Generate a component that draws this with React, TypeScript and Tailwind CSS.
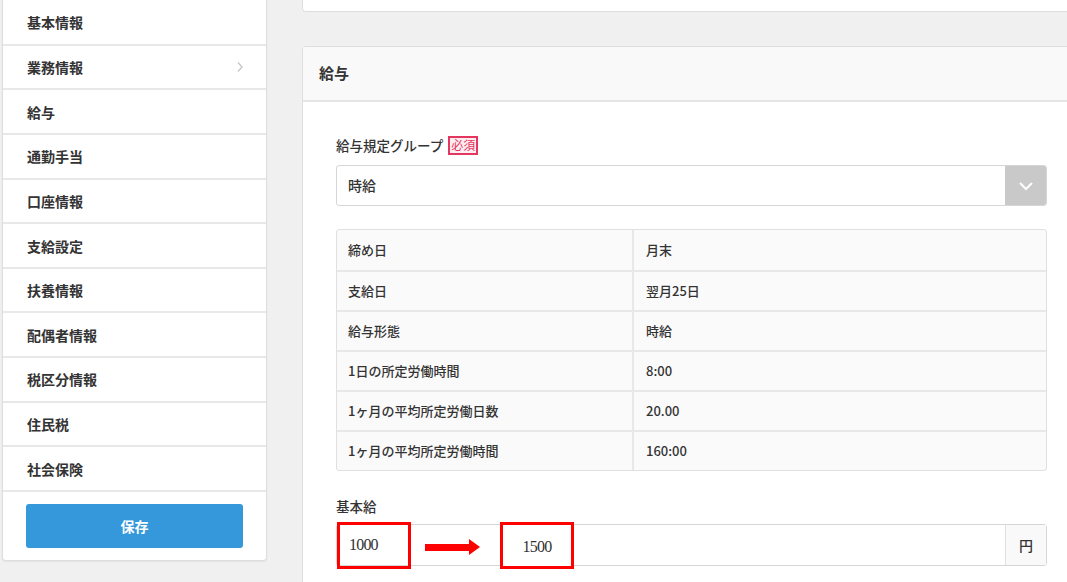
const FONT = { fontFamily: '"Noto Sans CJK JP", "Noto Sans", sans-serif' };

const menuItems = [
  "基本情報",
  "業務情報",
  "給与",
  "通勤手当",
  "口座情報",
  "支給設定",
  "扶養情報",
  "配偶者情報",
  "税区分情報",
  "住民税",
  "社会保険",
];

const rows = [
  ["締め日", "月末"],
  ["支給日", "翌月25日"],
  ["給与形態", "時給"],
  ["1日の所定労働時間", "8:00"],
  ["1ヶ月の平均所定労働日数", "20.00"],
  ["1ヶ月の平均所定労働時間", "160:00"],
];

function Chevron({ className }: { className?: string }) {
  return (
    <svg width="8" height="12" viewBox="0 0 8 12" className={className}>
      <polyline points="2,1.5 6,6 2,10.5" fill="none" stroke="currentColor" strokeWidth="1.4" />
    </svg>
  );
}

export default function App() {
  return (
    <div
      className="w-[1067px] h-[582px] bg-[#f0f0f0] overflow-hidden flex items-start text-[#333]"
      style={FONT}
    >
      {/* サイドメニュー */}
      <aside className="ml-[2px] w-[265px] h-[561px] shrink-0 bg-white border border-t-0 border-[#dedede] rounded-b-[4px] flex flex-col pt-[1px] shadow-[0_1px_2px_rgba(0,0,0,0.06)]">
        {menuItems.map((label, i) => (
          <div
            key={label}
            className="h-[44.65px] shrink-0 border-b-2 border-[#e8e8e8] flex items-center justify-between pl-[24px] pr-[22px]"
          >
            <span className="text-[14px] font-bold leading-none">{label}</span>
            {i === 1 && <Chevron className="text-[#c8c8c8]" />}
          </div>
        ))}
        <div className="pt-[12px] px-[23px]">
          <button className="w-full h-[44px] rounded-[3px] bg-[#3498db] text-white text-[14px] font-bold">
            保存
          </button>
        </div>
      </aside>

      {/* メイン */}
      <main className="ml-[35px] w-[800px] shrink-0 flex flex-col">
        <div className="h-[12px] shrink-0 bg-white border border-t-0 border-[#dedede] rounded-bl-[4px]" />

        <section className="mt-[34px] shrink-0 bg-white border border-r-0 border-[#dedede] rounded-tl-[4px]">
          <div className="h-[55px] bg-[#f9f9f9] border-b-2 border-[#e5e5e5] flex items-center px-[16px]">
            <h2 className="text-[15px] font-bold">給与</h2>
          </div>

          <div className="pt-[33px] pl-[33px] w-[744px] pb-[20px]">
            <div className="h-[20px] flex items-center gap-[5px]">
              <span className="text-[13.5px] font-medium">給与規定グループ</span>
              <span className="h-[19px] px-[1px] border-2 border-[#e4365f] bg-[#fdeef2] text-[#e4365f] text-[12px] leading-none flex items-center">
                必須
              </span>
            </div>

            <div className="mt-[10px] h-[41px] flex border border-[#d6d6d6] rounded-[3px] overflow-hidden">
              <div className="flex-1 flex items-center px-[11px] text-[14px] font-medium">時給</div>
              <div className="w-[41px] bg-[#c9c9c9] flex items-center justify-center">
                <svg width="16" height="10" viewBox="0 0 16 10">
                  <polyline points="2,2 8,8 14,2" fill="none" stroke="#fff" strokeWidth="2" />
                </svg>
              </div>
            </div>

            <div className="mt-[23px] border border-[#e0e0e0] rounded-[3px] bg-[#fafafa]">
              {rows.map(([k, v], i) => (
                <div
                  key={k}
                  className={`h-[40px] flex text-[13px] font-medium ${i > 0 ? "border-t-2 border-[#e8e8e8]" : ""}`}
                >
                  <div className="w-[297px] border-r-2 border-[#e8e8e8] flex items-center pl-[11px]">{k}</div>
                  <div className="flex-1 flex items-center pl-[12px]">{v}</div>
                </div>
              ))}
            </div>

            <div className="mt-[25px] h-[20px] flex items-center text-[13.5px] font-medium">基本給</div>

            <div className="relative mt-[8px] h-[42px] flex border border-[#d6d6d6] rounded-[3px]">
              <div
                className="flex-1 flex items-center pl-[12px] text-[16px] tracking-[-0.8px]"
                style={{ fontFamily: '"Liberation Serif", serif' }}
              >
                1000
              </div>
              <div className="w-[41px] bg-[#f9f9f9] border-l border-[#e0e0e0] flex items-center justify-center text-[14px] font-medium">
                円
              </div>

              {/* 注釈 */}
              <div className="absolute left-[0px] top-[-3px] w-[74px] h-[47px] border-[3px] border-[#ff0000]" />
              <div className="absolute left-[88px] top-[14px] flex items-center">
                <div className="w-[44px] h-[7px] bg-[#ff0000]" />
                <div className="w-0 h-0 border-y-[8px] border-y-transparent border-l-[11px] border-l-[#ff0000]" />
              </div>
              <div className="absolute left-[163px] top-[-3px] w-[74px] h-[47px] border-[3px] border-[#ff0000] bg-white flex items-center justify-center">
                <span
                  className="text-[16px] tracking-[-0.8px] mt-[3px]"
                  style={{ fontFamily: '"Liberation Serif", serif' }}
                >
                  1500
                </span>
              </div>
            </div>
          </div>
        </section>
      </main>
    </div>
  );
}
